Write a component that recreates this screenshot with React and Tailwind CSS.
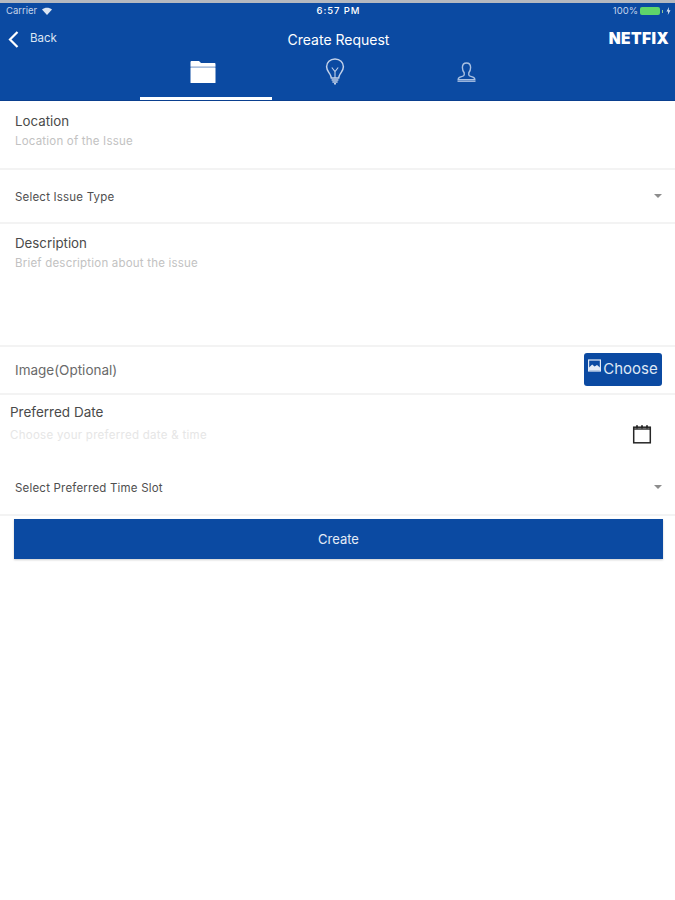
import React from "react";

const font = "font-['Inter','Liberation_Sans',sans-serif]";

function Caret() {
  return <div className="w-0 h-0 border-l-[4px] border-r-[4px] border-t-[4px] border-l-transparent border-r-transparent border-t-[#8d8d8d]" />;
}

function Divider() {
  return <div className="h-[2px] bg-[#f3f3f3]" />;
}

function FolderIcon() {
  return (
    <svg width="26" height="24" viewBox="0 0 26 24" fill="none">
      <path d="M0.5 2.2C0.5 1.4 1 1 1.8 1H9L11 3H24.4C25.2 3 25.5 3.5 25.5 4.2V6H0.5Z" fill="#ffffff" />
      <rect x="0.5" y="6" width="25" height="1.4" fill="#c6d2e6" />
      <rect x="0.5" y="7.4" width="25" height="15.6" rx="0.6" fill="#ffffff" />
    </svg>
  );
}

function BulbIcon() {
  return (
    <svg width="20" height="27" viewBox="0 0 20 27" fill="none" stroke="#c2d1e9" strokeWidth="1.5">
      <path d="M10 1C5 1 1.6 4.6 1.6 8.8C1.6 12.4 4.2 14.4 5.4 17C6 18.2 6.2 19 6.3 20H13.7C13.8 19 14 18.2 14.6 17C15.8 14.4 18.4 12.4 18.4 8.8C18.4 4.6 15 1 10 1Z" />
      <path d="M6.8 9.5L10 13.5L13.2 9.5M10 13.5V20" strokeWidth="1.1" />
      <path d="M6.6 22H13.4M7.4 24H12.6M9 25.8H11" strokeWidth="1.4" />
    </svg>
  );
}

function UserIcon() {
  return (
    <svg width="19" height="20" viewBox="0 0 19 20" fill="none" stroke="#a9c0e2" strokeWidth="1.4">
      <path d="M9.5 1C6.8 1 5.4 3 5.4 5.6C5.4 8 6.2 9.6 7.2 10.8V13C7.2 14.4 3.6 14.6 2.2 15.6C1.5 16.1 1.2 16.8 1.2 17.6H17.8C17.8 16.8 17.5 16.1 16.8 15.6C15.4 14.6 11.8 14.4 11.8 13V10.8C12.8 9.6 13.6 8 13.6 5.6C13.6 3 12.2 1 9.5 1Z" />
      <path d="M0.5 19.2H18.5" />
    </svg>
  );
}

function CalendarIcon() {
  return (
    <svg width="20" height="20" viewBox="0 0 20 20" fill="none" stroke="#262626">
      <rect x="1.7" y="3.2" width="16.6" height="15.6" strokeWidth="1.5" fill="#ffffff" />
      <path d="M1.7 5H18.3" strokeWidth="1.4" />
      <path d="M5 1.2V4.4M10 1.2V4.4M15 1.2V4.4" strokeWidth="1.8" />
    </svg>
  );
}

function PictureIcon() {
  return (
    <svg width="13" height="13" viewBox="0 0 13 13">
      <rect x="0.6" y="1" width="11.8" height="11" fill="#0b4aa2" stroke="#e4ebf6" strokeWidth="1.2" />
      <path d="M1 11.5V8.6L4.2 5.4L6.6 7.6L9 6L12 8.4V11.5Z" fill="#e4ebf6" />
    </svg>
  );
}

function Field({ label, hint, className }) {
  return (
    <div className={className}>
      <div className="text-[13.3px] leading-4 text-[#4a4a4a]">{label}</div>
      <div className="mt-1 text-[11.5px] leading-4 tracking-[0.2px] text-[#c2c2c2]">{hint}</div>
    </div>
  );
}

function SelectRow({ label, className }) {
  return (
    <div className={`flex items-center justify-between pl-[15px] pr-[13px] ${className}`}>
      <span className="pt-[3px] text-[11.5px] tracking-[0.2px] text-[#4f4f4f]">{label}</span>
      <Caret />
    </div>
  );
}

export default function App() {
  return (
    <div className={`min-h-[900px] bg-white ${font}`}>
      {/* header */}
      <div className="h-[101px] flex flex-col bg-[#0b4aa2] border-t-[3px] border-[#b5b9c0]">
        <div className="h-[15px] pt-[1px] grid grid-cols-3 items-center pl-[6px] pr-[4px] text-[9.5px] text-[#c5d4ea]">
          <div className="flex items-center gap-[5px]">
            <span>Carrier</span>
            <svg width="10" height="8" viewBox="0 0 10 8" fill="#dbe5f3">
              <path d="M5 8L0 2.6C2.8 0 7.2 0 10 2.6Z" />
            </svg>
          </div>
          <span className="text-center text-white font-medium tracking-[0.9px]">6:57 PM</span>
          <div className="flex items-center justify-end gap-[2px]">
            <span>100%</span>
            <div className="w-[20px] h-[8px] rounded-[2px] bg-[#5fd66a]" />
            <div className="w-[1px] h-[3px] bg-[#8fc79a]" />
            <svg width="5" height="8" viewBox="0 0 5 8" fill="#dbe5f3" className="ml-[1px]">
              <path d="M3 0L0.5 4.5H2.2L1.8 8L4.5 3.2H2.7Z" />
            </svg>
          </div>
        </div>
        <div className="h-[33px] flex items-center justify-between pl-[8px] pr-[6px] pt-[9px]">
          <div className="flex items-center gap-[11px] w-[120px]">
            <svg width="11" height="17" viewBox="0 0 11 17" fill="none" stroke="#ffffff" strokeWidth="2.2">
              <path d="M9.5 1L2 8.5L9.5 16" />
            </svg>
            <span className="text-[11.5px] text-[#dbe5f3]">Back</span>
          </div>
          <span className="text-[14px] text-white">Create Request</span>
          <span className="w-[120px] text-right text-[15.5px] font-black tracking-[0.4px] text-white">NETFIX</span>
        </div>
        <div className="flex-1 flex items-stretch pl-[140px]">
          <div className="w-[132px] flex flex-col items-center">
            <div className="flex-1 flex items-center pr-[6px] pb-[5px]"><FolderIcon /></div>
            <div className="h-[3px] w-full bg-white" />
          </div>
          <div className="w-[132px] flex items-center justify-center pr-[6px] pb-[9px]"><BulbIcon /></div>
          <div className="w-[132px] flex items-center justify-center pr-[8px] pb-[7px]"><UserIcon /></div>
        </div>
        <div className="h-[1px] bg-[#0a3f8f]" />
      </div>

      {/* form */}
      <Field label="Location" hint="Location of the Issue" className="h-[67px] pl-[15px] pt-[12px]" />
      <Divider />
      <SelectRow label="Select Issue Type" className="h-[52px]" />
      <Divider />
      <Field label="Description" hint="Brief description about the issue" className="h-[121px] pl-[15px] pt-[11px]" />
      <Divider />
      <div className="h-[46px] flex items-center justify-between pl-[15px] pr-[13px]">
        <span className="text-[13.5px] text-[#6a6a6a]">Image(Optional)</span>
        <button className="w-[78px] h-[33px] mb-[2px] flex items-center justify-center gap-[2px] rounded-[3px] bg-[#0b4aa2] text-[15px] text-[#dfe8f5]">
          <span className="mb-[7px]"><PictureIcon /></span>
          Choose
        </button>
      </div>
      <Divider />
      <div className="h-[65px] flex justify-between pl-[10px] pr-[23px] pt-[9px]">
        <div>
          <div className="text-[13.5px] leading-4 text-[#4a4a4a]">Preferred Date</div>
          <div className="mt-[7px] text-[11.5px] leading-4 tracking-[0.28px] text-[#e6e6e6]">Choose your preferred date &amp; time</div>
        </div>
        <div className="pt-[20px]"><CalendarIcon /></div>
      </div>
      <SelectRow label="Select Preferred Time Slot" className="h-[54px]" />
      <Divider />
      <div className="pl-[14px] pr-[12px] pt-[3px]">
        <button className="w-full h-[40px] pt-[2px] bg-[#0b4aa2] text-[13px] text-[#e4ebf6] shadow-[0_1px_2px_rgba(0,0,0,0.2)]">Create</button>
      </div>
    </div>
  );
}
